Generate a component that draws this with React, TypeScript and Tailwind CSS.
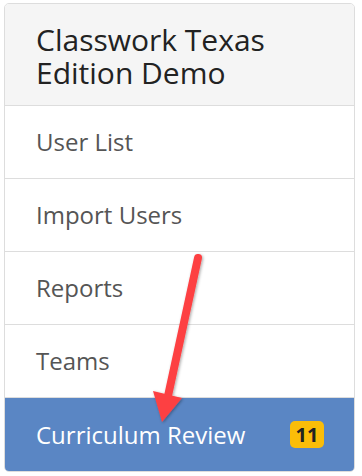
import React from "react";

export default function App() {
  const items = ["User List", "Import Users", "Reports", "Teams"];
  return (
    <div className="relative w-[362px] h-[476px] bg-white pl-[4px] pt-[3px]" style={{ fontFamily: '"Open Sans", sans-serif' }}>
      <div className="w-[351px] border border-[#dddddd] rounded-[5px] overflow-hidden">
        <div className="bg-[#f5f5f5] h-[102px] border-b border-[#dddddd] pl-[31px] pr-[31px] pt-[19px] text-[30px] leading-[33px] text-[#222222]">
          Classwork Texas Edition Demo
        </div>
        {items.map((t) => (
          <div key={t} className="h-[73px] border-b border-[#dddddd] flex items-center pl-[31px] text-[24px] text-[#555555]">
            {t}
          </div>
        ))}
        <div className="h-[73px] bg-[#5a86c4] flex items-center justify-between pl-[31px] pr-[30px] text-[24px] text-white">
          <span>Curriculum Review</span>
          <span className="bg-[#fbbd08] text-[#222222] font-bold text-[20px] leading-none rounded-[5px] w-[34px] h-[27px] flex items-center justify-center">11</span>
        </div>
      </div>
      <svg className="absolute left-0 top-0 pointer-events-none" width="362" height="476" viewBox="0 0 362 476">
        <defs>
          <filter id="sh" x="-50%" y="-50%" width="200%" height="200%">
            <feDropShadow dx="1" dy="1" stdDeviation="1.5" floodColor="#000" floodOpacity="0.35" />
          </filter>
        </defs>
        <g filter="url(#sh)">
          <line x1="198" y1="258" x2="168" y2="396" stroke="#fd4043" strokeWidth="8" strokeLinecap="round" />
          <polygon points="153,391 182,398 162,422" fill="#fd4043" />
        </g>
      </svg>
    </div>
  );
}
